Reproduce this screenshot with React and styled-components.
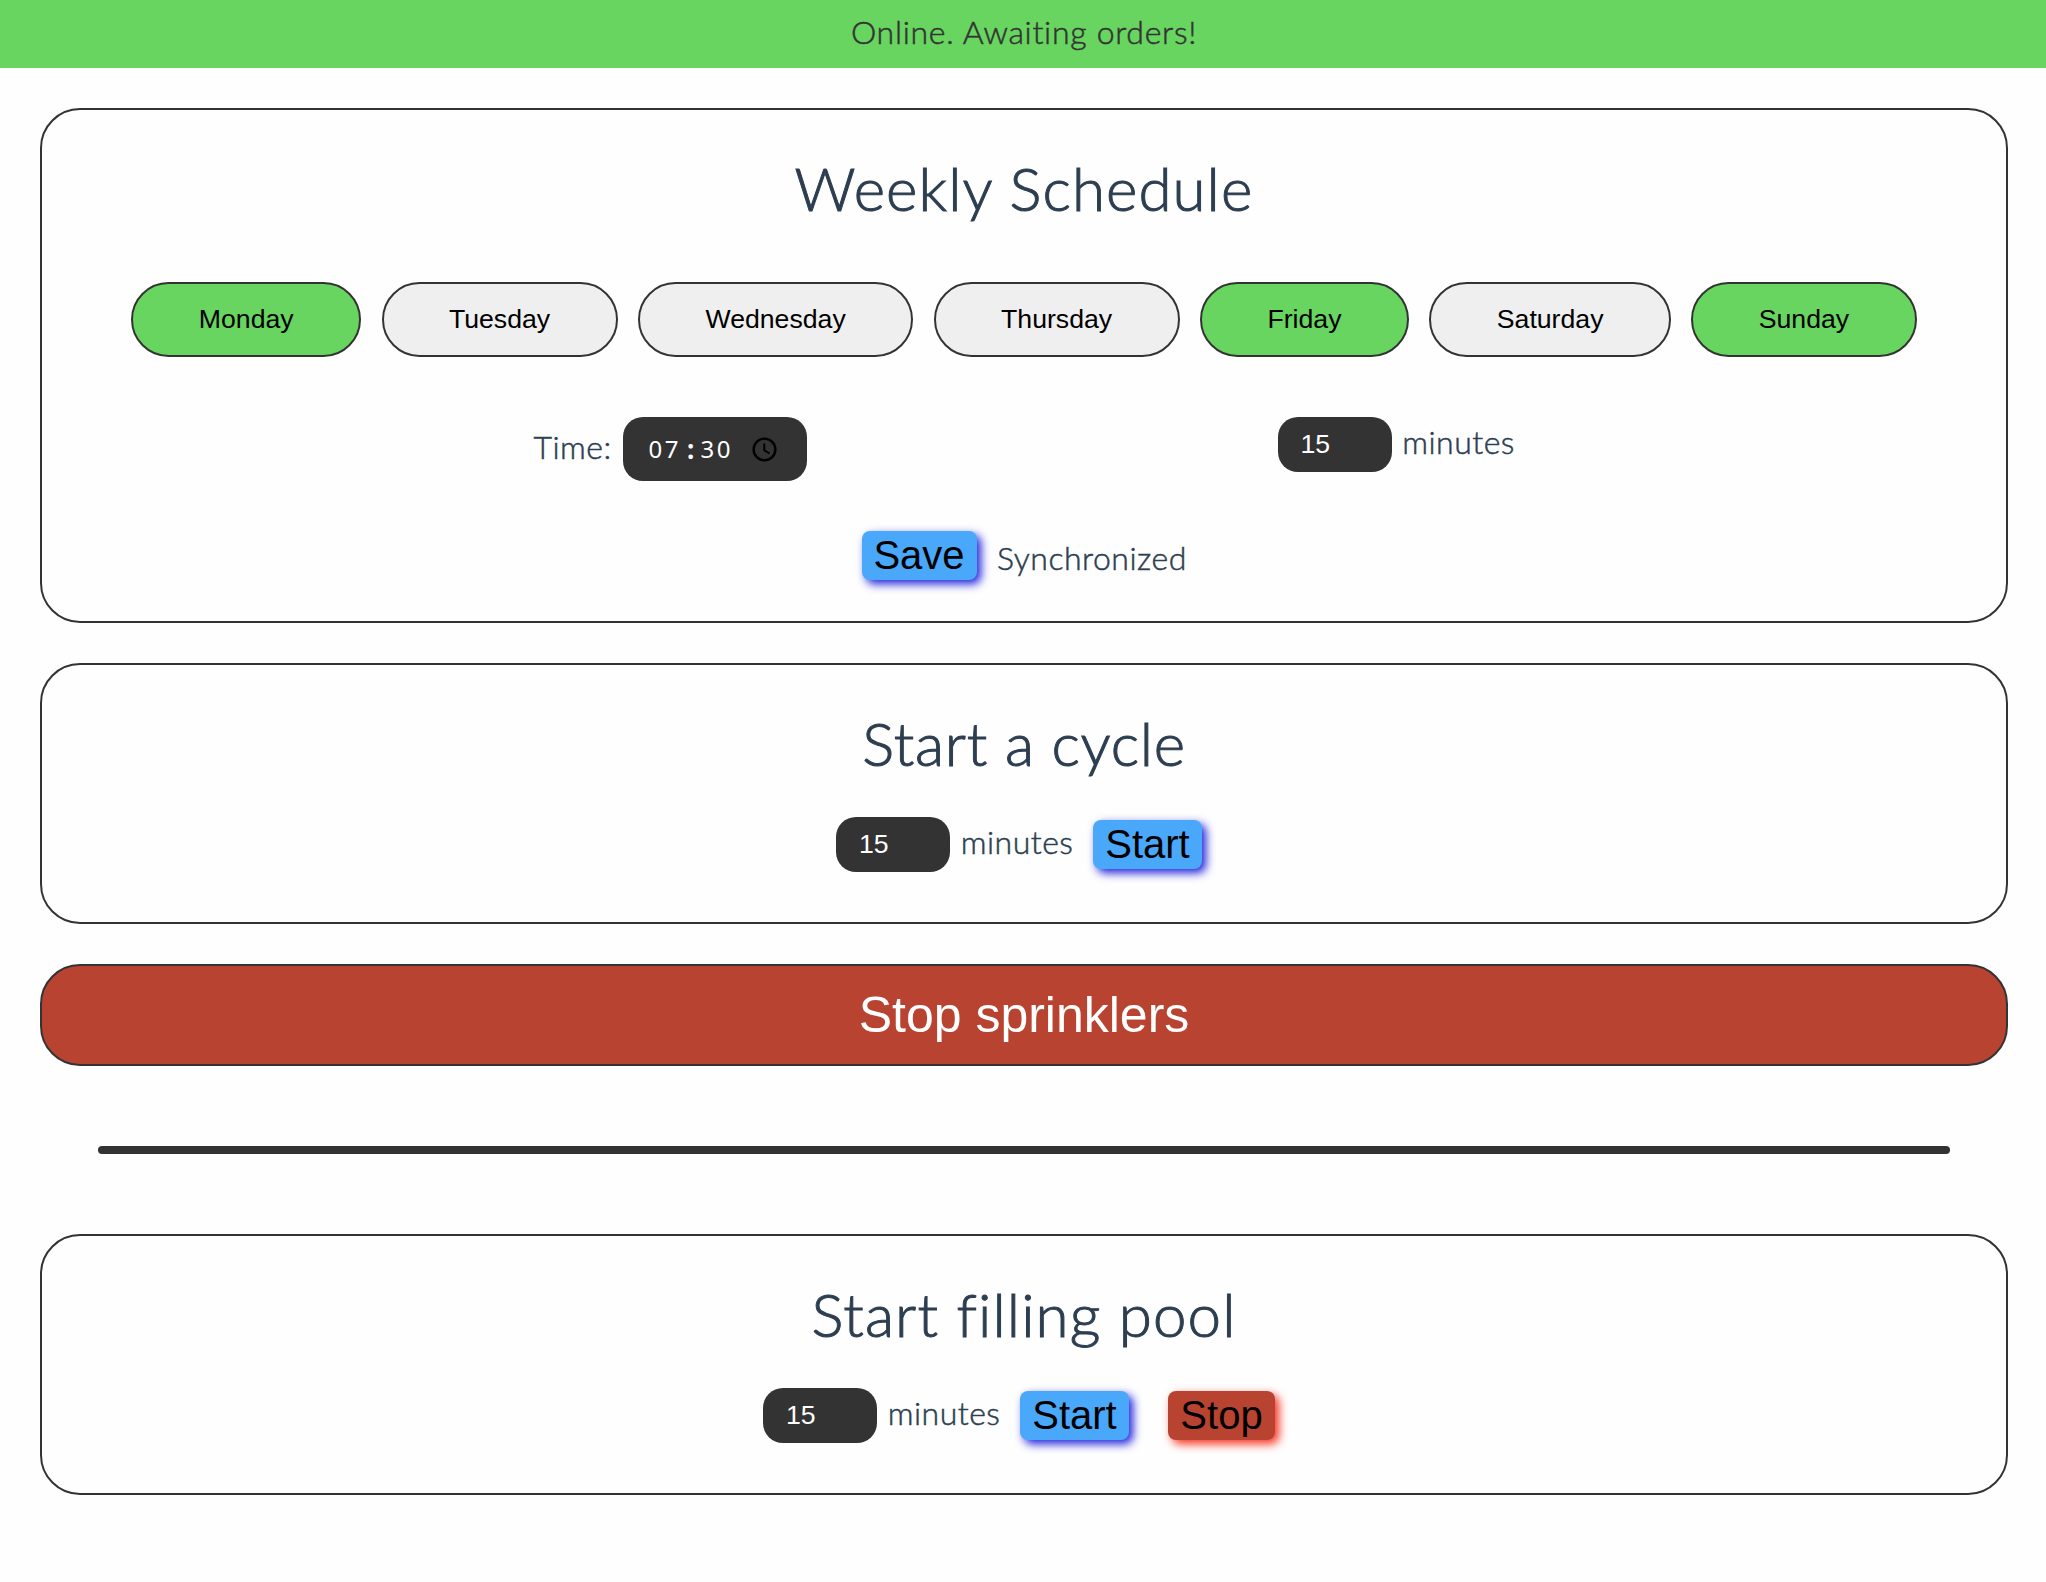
import React, { useState } from "react";
import styled, { createGlobalStyle } from "styled-components";

const GlobalStyle = createGlobalStyle`
  * { box-sizing: border-box; }
  html { overflow: hidden; }
  body {
    margin: 0;
    background: #fefefe;
    color: #2c3e50;
    font-family: Lato, "Open Sans", sans-serif;
    font-size: 32px;
    font-weight: 300;
  }
  button, input { font-family: "Liberation Sans", Arial, sans-serif; }
`;

const Page = styled.div`
  width: 2048px;
  height: 1582px;
`;

const StatusBar = styled.header`
  height: 68px;
  display: flex;
  justify-content: center;
  padding-top: 12px;
  line-height: 40px;
  background: #67d55f;
  color: #333;
  letter-spacing: 0.7px;
  -webkit-text-stroke: 0.5px #333;
`;

const Main = styled.main`
  display: flex;
  flex-direction: column;
  gap: 40px;
  padding: 40px;
`;

const Card = styled.section`
  height: ${(p) => p.$height}px;
  display: flex;
  flex-direction: column;
  align-items: center;
  border: 2px solid #333;
  border-radius: 40px;
`;

const Title = styled.h1`
  margin: 42px 0 1px;
  height: 72px;
  line-height: 72px;
  font-size: 60px;
  font-weight: 300;
  letter-spacing: ${(p) => p.$spacing || 0}px;
  -webkit-text-stroke: 1px #2c3e50;
  white-space: nowrap;
`;

const Days = styled.div`
  display: flex;
  gap: 20.5px;
  margin-top: 57px;
`;

const Day = styled.button`
  height: 75px;
  padding: 0 65.4px;
  border: 2px solid #333;
  border-radius: 40px;
  background: ${(p) => (p.$active ? "#67d55f" : "#efefef")};
  color: #000;
  font-size: 26.667px;
`;

const Settings = styled.div`
  display: flex;
  align-items: flex-start;
  gap: 471px;
  margin-top: 60px;
  padding-right: 1px;
  height: 64px;
`;

const Field = styled.div`
  display: flex;
  align-items: flex-start;
`;

const Label = styled.span`
  display: block;
  width: ${(p) => p.$width}px;
  margin-top: ${(p) => p.$top}px;
  padding-left: ${(p) => p.$indent || 0}px;
  line-height: 40px;
  letter-spacing: 0.5px;
  -webkit-text-stroke: 0.5px #2c3e50;
  white-space: nowrap;
`;

const TimeBox = styled.div`
  width: 184px;
  height: 64px;
  padding: 0 28px 0 26px;
  display: flex;
  align-items: center;
  justify-content: space-between;
  border-radius: 20px;
  background: #333;
  color: #fff;
  font-family: "Noto Sans", sans-serif;
  font-size: 24px;
  font-weight: 400;
  line-height: 64px;
`;

const Digits = styled.span`
  display: flex;
  letter-spacing: 2.5px;
`;

const Colon = styled.b`
  width: 19.5px;
  text-align: center;
  letter-spacing: 0;
  font-size: 26px;
  font-weight: 700;
`;

const Clock = styled.svg`
  display: block;
  width: 29px;
  height: 29px;
`;

const Minutes = styled.input`
  width: 114px;
  height: 55px;
  padding: 0 23px;
  border: 0;
  border-radius: 20px;
  outline: 0;
  background: #333;
  color: #fff;
  font-size: 26.667px;
`;

const Row = styled.div`
  display: flex;
  align-items: flex-start;
  margin-top: ${(p) => p.$top}px;
  padding-right: ${(p) => p.$trail}px;
`;

const Action = styled.button`
  width: ${(p) => p.$width}px;
  height: 49px;
  margin: 3px 0 0 ${(p) => p.$left || 0}px;
  padding: 0;
  border: 0;
  border-radius: 8px;
  background: ${(p) => (p.$danger ? "#b84331" : "#4aa8fa")};
  box-shadow: 4px 4px 10px ${(p) => (p.$danger ? "#f73322" : "#1e1edc")};
  color: #000;
  font-size: 40px;
  line-height: 49px;
`;

const StopAll = styled.button`
  height: 102px;
  padding: 0;
  border: 2px solid #333;
  border-radius: 40px;
  background: #b84331;
  color: #fff;
  font-size: 50px;
`;

const Divider = styled.hr`
  width: 1852px;
  height: 8px;
  margin: 40px auto;
  border: 0;
  border-radius: 4px;
  background: #333;
`;

const WEEK = ["Monday", "Tuesday", "Wednesday", "Thursday", "Friday", "Saturday", "Sunday"];

function Duration() {
  return (
    <Field>
      <Minutes type="number" defaultValue={15} />
      <Label $width={122} $top={5} $indent={10.7}>minutes</Label>
    </Field>
  );
}

export default function App() {
  const [active, setActive] = useState(["Monday", "Friday", "Sunday"]);
  const toggle = (day) =>
    setActive((days) => (days.includes(day) ? days.filter((d) => d !== day) : [...days, day]));

  return (
    <Page>
      <GlobalStyle />
      <StatusBar>Online. Awaiting orders!</StatusBar>
      <Main>
        <Card $height={515}>
          <Title $spacing={1.1}>Weekly Schedule</Title>
          <Days>
            {WEEK.map((day) => (
              <Day key={day} $active={active.includes(day)} onClick={() => toggle(day)}>
                {day}
              </Day>
            ))}
          </Days>
          <Settings>
            <Field>
              <Label $width={89} $top={10}>Time:</Label>
              <TimeBox>
                <Digits>
                  07<Colon>:</Colon>30
                </Digits>
                <Clock viewBox="0 0 24 24" fill="none" stroke="#000" strokeWidth="2">
                  <circle cx="12" cy="12" r="9" />
                  <path d="M11.8 7v5.6l4.4 2.7" strokeWidth="1.6" />
                </Clock>
              </TimeBox>
            </Field>
            <Duration />
          </Settings>
          <Row $top={47} $trail={2}>
            <Action $width={115}>Save</Action>
            <Label $width={208} $top={10} $indent={20.5}>Synchronized</Label>
          </Row>
        </Card>
        <Card $height={261}>
          <Title $spacing={0.7}>Start a cycle</Title>
          <Row $top={37} $trail={10}>
            <Duration />
            <Action $width={109} $left={21}>Start</Action>
          </Row>
        </Card>
        <StopAll>Stop sprinklers</StopAll>
        <Divider />
        <Card $height={261}>
          <Title $spacing={1.1}>Start filling pool</Title>
          <Row $top={37} $trail={10}>
            <Duration />
            <Action $width={109} $left={21}>Start</Action>
            <Action $width={107} $left={39} $danger>Stop</Action>
          </Row>
        </Card>
      </Main>
    </Page>
  );
}
